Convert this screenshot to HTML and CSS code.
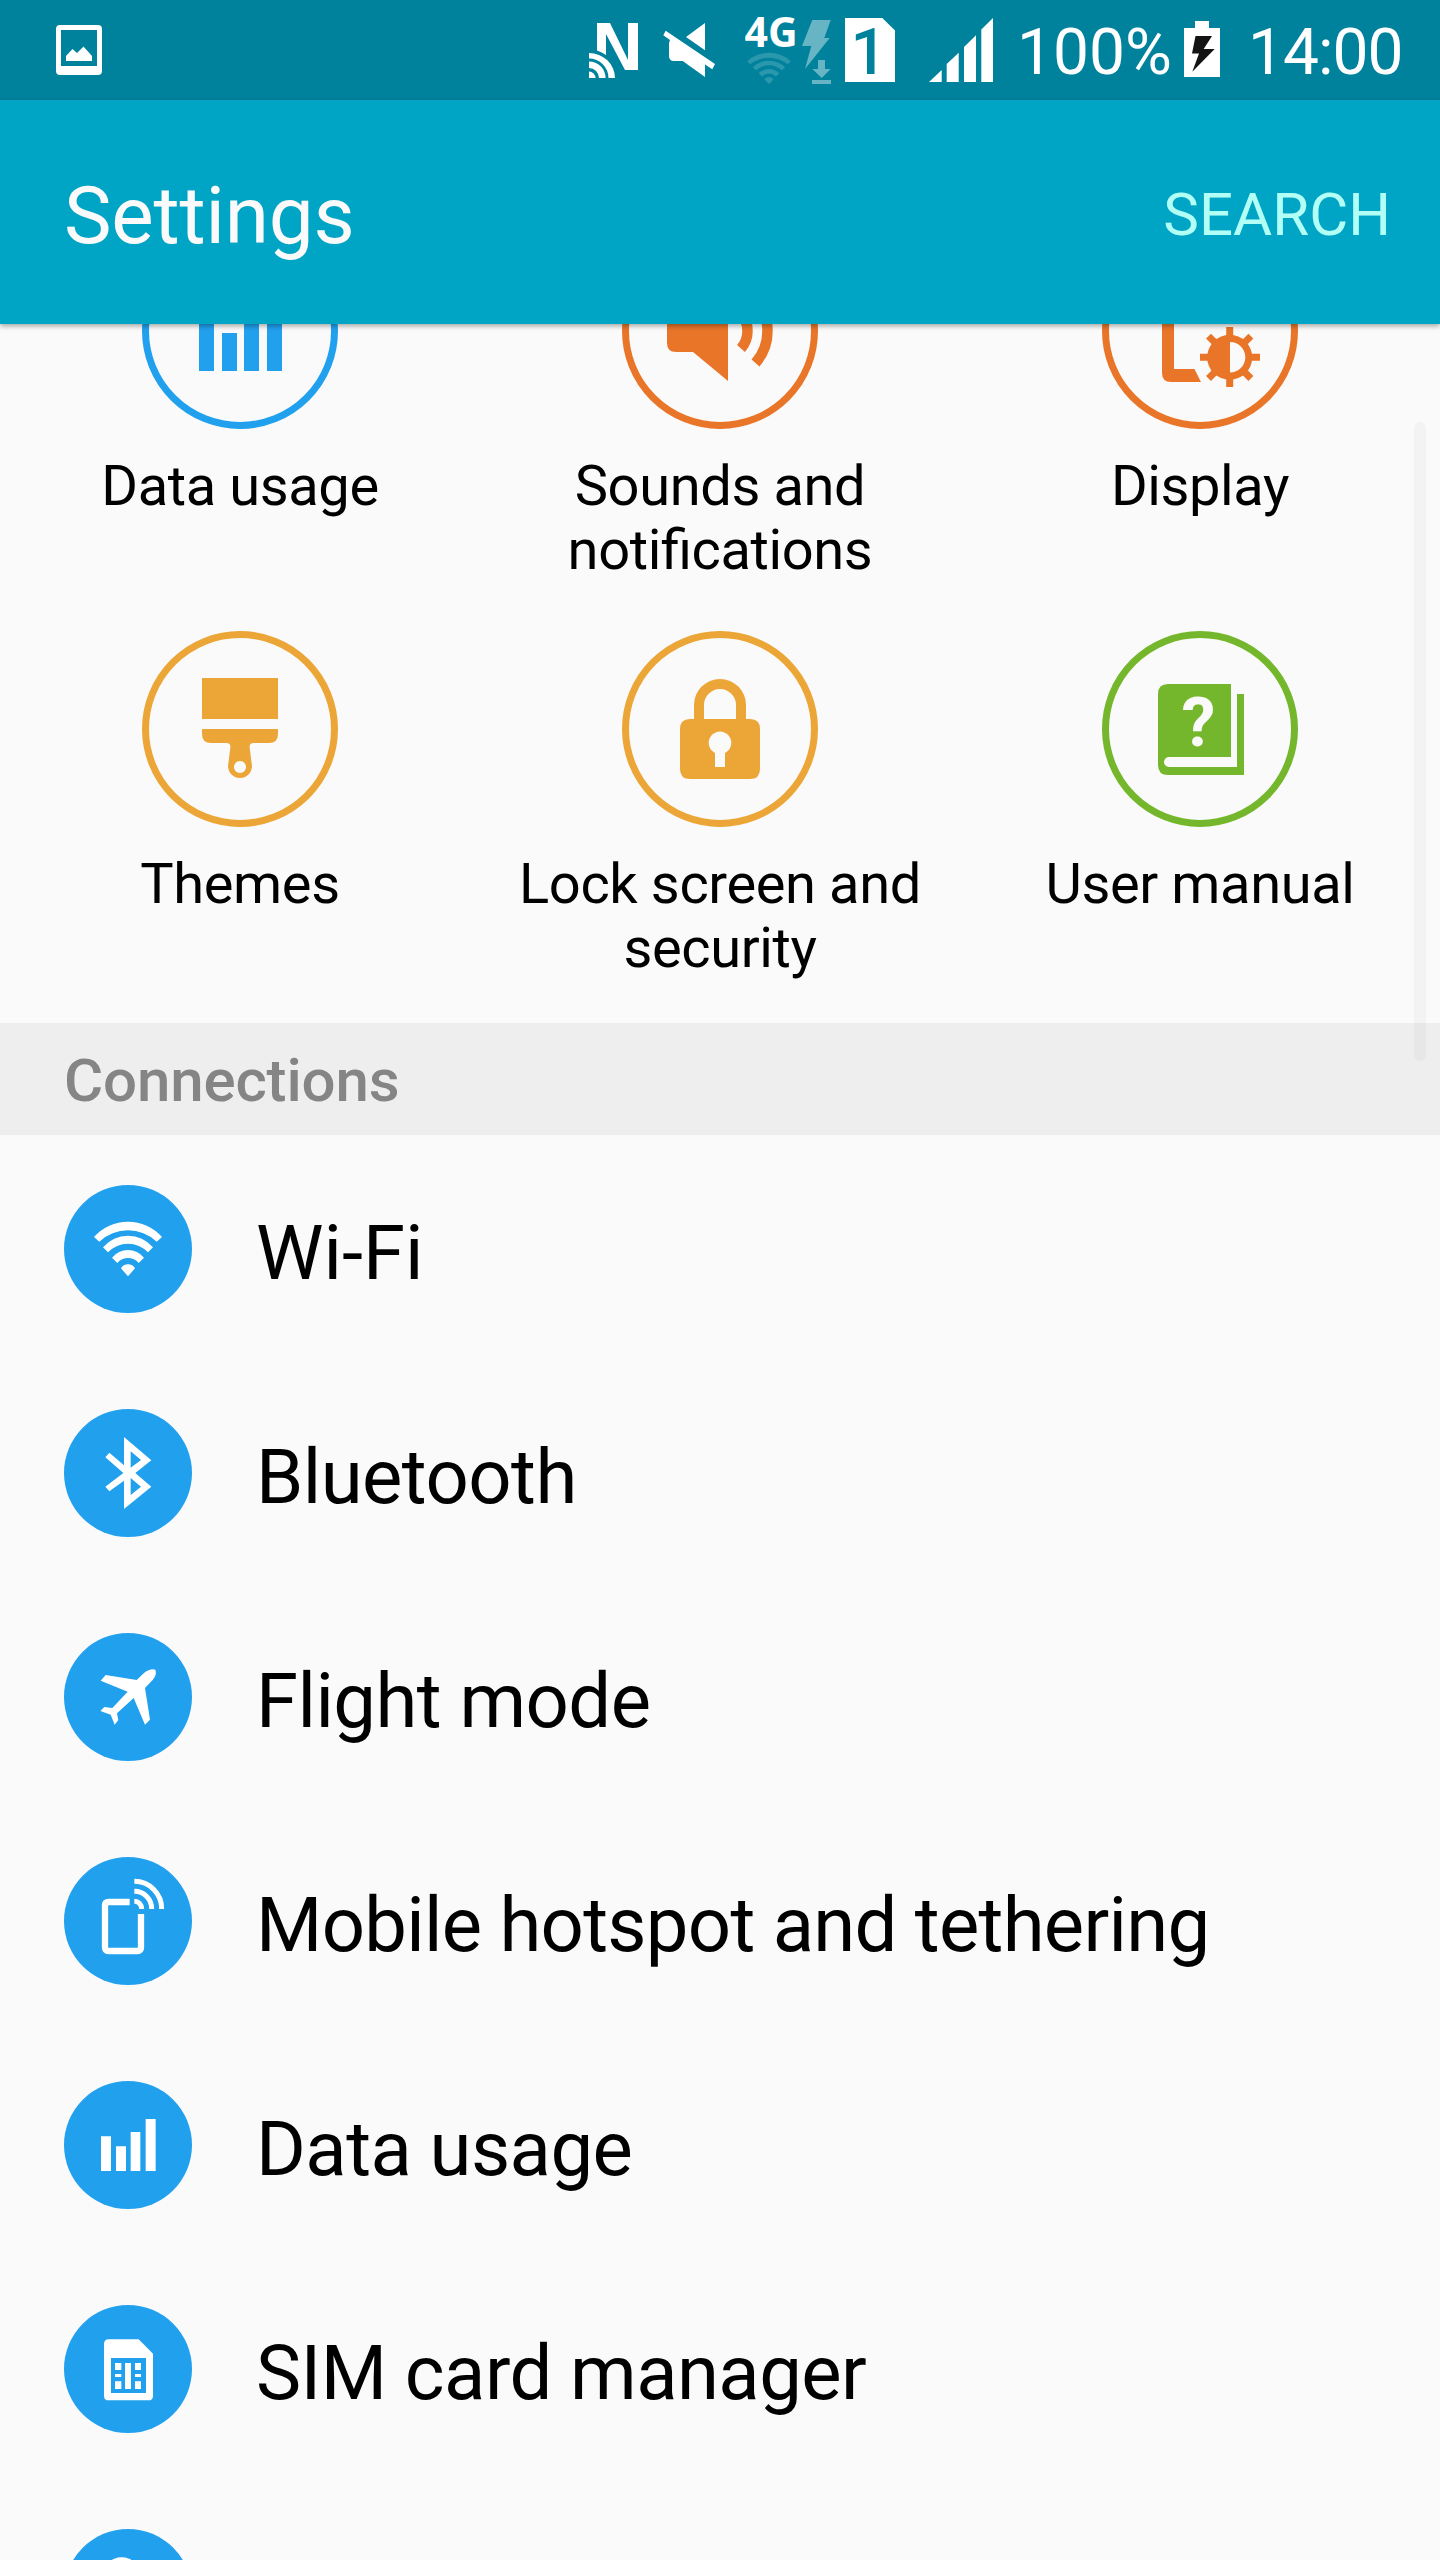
FILE: index.html
```html
<!DOCTYPE html>
<html lang="en">
<head>
<meta charset="utf-8">
<title>Settings</title>
<link rel="stylesheet" href="styles.css">
</head>
<body>
<div class="screen">
  <div class="status">
    <svg class="st-photo" viewBox="56 0 46 100" width="46" height="100"><path fill-rule="evenodd" d="M60 25H98Q102 25 102 29V71Q102 75 98 75H60Q56 75 56 71V29Q56 25 60 25ZM61 30V66H97V30Z"/><path d="M66 56 72.500 49 77 53 83.500 46.500 92 56V61H66Z"/></svg>
    <svg class="st-nfc" viewBox="589 0 49 100" width="49" height="100"><path d="M597 23H610L628 60V23H638V70H625L606 34V55Q602 52 597 50.500Z"/><path d="M589 78V71.500A6.500 6.500 0 0 1 595.500 78ZM589 68A10 10 0 0 1 599 78H605.600A16.600 16.600 0 0 0 589 61.400ZM589 58.500A19.500 19.500 0 0 1 608.500 78H615A26 25 0 0 0 589 53Z"/></svg>
    <svg class="st-mute" viewBox="663 0 53 100" width="53" height="100"><path d="M665.700 30.700 715 64 712.300 69.300 705 64.500V77L682.700 61H674Q669 61 669 56V43L670 40 663.300 35.300ZM705 23V50.300L686 37Z"/></svg>
    <svg class="st-net" viewBox="745 0 87 100" width="87" height="100"><text class="net-type" x="744.500" y="47">4G</text><g class="faint" transform="translate(769 84) scale(.215 .19)"><path d="M-102 -118A136 136 0 0 1 102 -118L86 -104A126 126 0 0 0 -86 -104ZM-75 -87A98 98 0 0 1 75 -87L60 -72A82 82 0 0 0 -60 -72ZM-48 -56A62 62 0 0 1 48 -56L32 -40A42 42 0 0 0 -32 -40ZM-21 -24A24 24 0 0 1 21 -24L0 0Z"/></g><path class="half" d="M812.300 20H830.700L824.300 38H829.700L805 69 811.300 46H802ZM818 60H825V69H830.700L821.700 78 812.300 69H818ZM812 80H831V84H812Z"/></svg>
    <svg class="st-sim" viewBox="845 0 50 100" width="50" height="100"><path d="M845 18H882.300L895 30.500V82H845Z"/><text class="sim-num" x="850.500" y="74">1</text></svg>
    <svg class="st-signal" viewBox="929 0 64 100" width="64" height="100"><path d="M929 82 941.700 70V82ZM946.700 82V64L958.700 52.700V82ZM964 82V47L976 35.300V82ZM981.300 82V29.500L993 18V82Z"/></svg>
    <span class="percent">100%</span>
    <svg class="st-battery" viewBox="1184 0 36 100" width="36" height="100"><path d="M1195 21H1209V28H1220V77H1184V28H1195Z"/><path class="bolt" d="M1195.500 36H1212L1203.700 49H1214.700L1192.300 71.700 1199 53.500H1192Z"/></svg>
    <span class="clock">14:00</span>
  </div>

  <header class="appbar">
    <h1 class="title">Settings</h1>
    <span class="search">SEARCH</span>
  </header>

  <main class="content">
    <div class="tiles">
      <div class="tile blue">
        <svg viewBox="142 233 196 196" width="196" height="196"><circle class="ring" cx="240" cy="331" r="94.500"/><path d="M199 311H214V371H199ZM222 333H237V371H222ZM244 304H259V371H244ZM267 284H282V371H267Z"/></svg>
        <span class="tile-label">Data usage</span>
      </div>
      <div class="tile orange">
        <svg viewBox="622 233 196 196" width="196" height="196"><circle class="ring" cx="720" cy="331" r="94.500"/><path d="M728 281V381L693 352H676Q667 352 667 343V319Q667 310 676 310H693Z"/><path class="wave" d="M741 313.500A26.800 26.800 0 0 1 741 348.500M755.500 299A48.700 48.700 0 0 1 755.500 363"/></svg>
        <span class="tile-label">Sounds and notifications</span>
      </div>
      <div class="tile orange">
        <svg viewBox="1102 233 196 196" width="196" height="196"><circle class="ring" cx="1200" cy="331" r="94.500"/><path d="M1162 290V373Q1162 382 1171 382H1201L1194.500 369H1174V290Z"/><path class="ray" d="M1229.700 327V387M1200 357.300H1260M1208.500 336.100 1250.900 378.500M1250.900 336.100 1208.500 378.500"/><circle cx="1229.700" cy="357.300" r="22.500"/><path class="paper" d="M1230 342A15.300 15.300 0 0 1 1230 372.600Z"/></svg>
        <span class="tile-label">Display</span>
      </div>
      <div class="tile amber">
        <svg viewBox="142 631 196 196" width="196" height="196"><circle class="ring" cx="240" cy="729" r="94.500"/><path fill-rule="evenodd" d="M202 678H278V719H202ZM202 729H278V734Q278 743 269 743H253.500Q249.500 743 249.600 747L252 766A12 12 0 1 1 228 766L230.400 747Q230.500 743 226.500 743H211Q202 743 202 734ZM240 761A6 6 0 1 0 240.010 761Z"/></svg>
        <span class="tile-label">Themes</span>
      </div>
      <div class="tile amber">
        <svg viewBox="622 631 196 196" width="196" height="196"><circle class="ring" cx="720" cy="729" r="94.500"/><path fill-rule="evenodd" d="M694 719V705A26 26 0 0 1 746 705V719H750Q760 719 760 729V769Q760 779 750 779H690Q680 779 680 769V729Q680 719 690 719ZM704 719H736V705A16 16 0 0 0 704 705ZM715 753V767H725V753A11.300 11.300 0 1 0 715 753Z"/></svg>
        <span class="tile-label">Lock screen and security</span>
      </div>
      <div class="tile green">
        <svg viewBox="1102 631 196 196" width="196" height="196"><circle class="ring" cx="1200" cy="729" r="94.500"/><path d="M1168 684H1231V757H1169A5 5 0 0 0 1169 767H1237V694H1244V775H1168Q1158 775 1158 765V694Q1158 684 1168 684Z"/><text class="question" x="1198.500" y="746">?</text></svg>
        <span class="tile-label">User manual</span>
      </div>
    </div>

    <h2 class="section">Connections</h2>

    <ul class="list">
      <li class="row"><svg class="badge" viewBox="192 495 384 384"><path transform="translate(384 769)" d="M-102 -118A136 136 0 0 1 102 -118L86 -104A126 126 0 0 0 -86 -104ZM-75 -87A98 98 0 0 1 75 -87L60 -72A82 82 0 0 0 -60 -72ZM-48 -56A62 62 0 0 1 48 -56L32 -40A42 42 0 0 0 -32 -40ZM-21 -24A24 24 0 0 1 21 -24L0 0Z"/></svg><span class="exact">Wi-Fi</span></li>
      <li class="row"><svg class="badge" viewBox="42 57 384 384"><path fill-rule="evenodd" d="M222 141 304 211 256 249 304 290 222 357V272L178 304 166 290 220 249 166 202 178 188 222 226ZM242 184V233L273 210ZM242 264V315L273 290Z"/></svg><span>Bluetooth</span></li>
      <li class="row"><svg class="badge" viewBox="42 729 384 384"><path d="M152 872 167 855 260 870 282 849Q300 835 316 839Q322 852 308 870L285 894 300 989 285 1004 251 924 201 970 205 990 194 1004 182 974 151 963 163 951 187 954 233 905Z"/></svg><span>Flight mode</span></li>
      <li class="row"><svg class="badge" viewBox="42 51 384 384"><path class="line" d="M239 186H176Q165 186 165 197V322Q165 333 176 333H262Q273 333 273 322V222"/><path class="arc" d="M253 184A22 22 0 0 1 275 207M253 154A52 52 0 0 1 305 207M253 124A82 82 0 0 1 335 207"/></svg><span class="tight">Mobile hotspot and tethering</span></li>
      <li class="row"><svg class="badge" viewBox="42 723 384 384"><path d="M153 889H183V993H153ZM198 919H228V993H198ZM242 876H271V993H242ZM287 837H317V993H287Z"/></svg><span>Data usage</span></li>
      <li class="row"><svg class="badge" viewBox="42 75 384 384"><path fill-rule="evenodd" d="M176 178H266L309 221V347Q309 361 295 361H176Q162 361 162 347V192Q162 178 176 178ZM183 234V339H288V234Z"/><path d="M195 249H214V270H195ZM195 282H214V291H195ZM195 304H214V327H195ZM225 249H243V327H225ZM255 249H273V270H255ZM255 282H273V291H255ZM255 304H273V327H255Z"/></svg><span>SIM card manager</span></li>
      <li class="row"><svg class="badge" viewBox="42 747 384 384"><circle cx="215" cy="890" r="58"/></svg></li>
    </ul>
    <div class="scrollbar"></div>
  </main>
</div>
</body>
</html>
```

FILE: styles.css
```css
* { box-sizing: border-box; margin: 0; padding: 0; }
body { width: 1440px; height: 2560px; overflow: hidden; background: #fafafa; color: #000; font-family: Roboto, sans-serif; }
.screen { display: flex; flex-direction: column; height: 2560px; }
svg { display: block; flex: none; }

.status { display: flex; flex: none; height: 100px; background: #00829d; color: #fff; }
.status svg { fill: #fff; }
.st-photo { margin-left: 56px; }
.st-nfc { margin-left: 487px; }
.st-mute { margin-left: 25px; }
.st-net { margin-left: 29px; }
.st-sim { margin-left: 13px; }
.st-signal { margin-left: 34px; }
.percent, .clock { font-size: 64px; line-height: 106px; white-space: nowrap; }
.percent { width: 167px; margin-left: 24px; }
.clock { margin-left: 28px; letter-spacing: -1px; }
.net-type { font: 700 41px "Noto Sans", sans-serif; }
.status .sim-num { font: 500 64px Roboto, sans-serif; fill: #00829d; }
.faint { opacity: .17; }
.half { opacity: .4; }
.bolt { fill: #141414; }

.appbar { position: relative; z-index: 1; display: flex; flex: none; align-items: center; justify-content: space-between; height: 224px; padding: 0 49px 0 64px; background: #00a5c5; box-shadow: 0 2px 5px rgba(0, 0, 0, .35); }
.title { padding-top: 7px; font-size: 80px; font-weight: 400; line-height: 94px; letter-spacing: -.2px; color: #fafafa; }
.search { padding-top: 5px; font-size: 60px; line-height: 70px; color: #b2fff6; }

.content { position: relative; flex: 1; min-height: 0; overflow: hidden; }
.tiles { display: grid; grid-template-columns: repeat(3, 480px); grid-template-rows: 398px 392px; margin-top: -91px; }
.tile { display: flex; flex-direction: column; align-items: center; }
.tile svg { fill: currentColor; }
.ring { fill: none; stroke: currentColor; stroke-width: 7; }
.wave { fill: none; stroke: currentColor; stroke-width: 10.500; }
.ray { fill: none; stroke: currentColor; stroke-width: 7; }
.paper { fill: #fafafa; }
.question { font: 700 68px Roboto, sans-serif; text-anchor: middle; fill: #fafafa; }
.tile-label { width: 420px; margin-top: 25px; font-size: 56px; line-height: 64px; letter-spacing: -.38px; font-feature-settings: "liga" 1; text-align: center; color: #000; }
.blue { color: #21a0ee; }
.orange { color: #e97529; }
.amber { color: #eca637; }
.green { color: #75b72c; }

.section { height: 112px; padding: 3px 64px 0; background: #eee; color: #858585; font-size: 60px; font-weight: 500; line-height: 110px; letter-spacing: -.15px; }
.list { padding-top: 2px; list-style: none; }
.row { display: flex; align-items: center; gap: 64px; height: 224px; padding-left: 64px; font-size: 76px; line-height: 90px; letter-spacing: -.54px; }
.row span { padding-top: 7px; }
.row .exact { letter-spacing: 0; }
.row .tight { letter-spacing: -.72px; }
.badge { width: 128px; height: 128px; border-radius: 50%; background: #21a0ee; fill: #fff; }
.line { fill: none; stroke: #fff; stroke-width: 19; }
.arc { fill: none; stroke: #fff; stroke-width: 15; }
.scrollbar { position: absolute; top: 98px; right: 14px; width: 12px; height: 639px; border-radius: 6px; background: rgba(0, 0, 0, .027); }
```
